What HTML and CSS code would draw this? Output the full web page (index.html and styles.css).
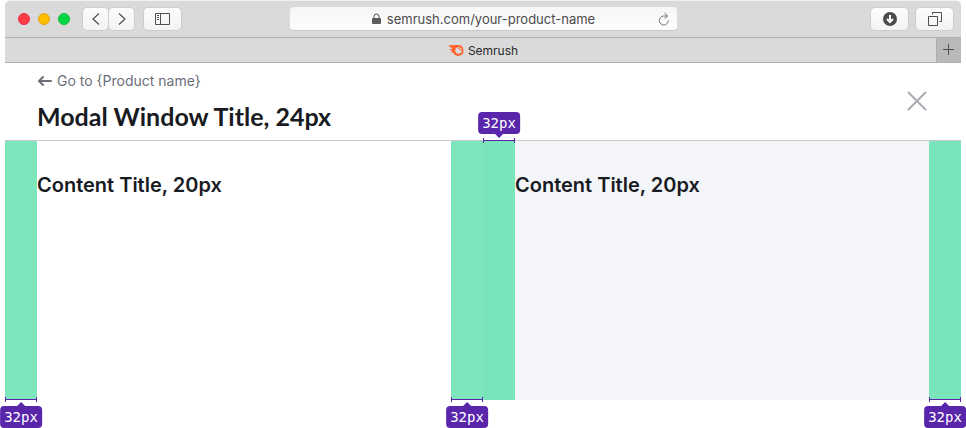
FILE: index.html
```html
<!DOCTYPE html>
<html lang="en">
<head>
<meta charset="utf-8">
<title>Semrush</title>
<link rel="stylesheet" href="styles.css">
</head>
<body>
<div class="window">
  <div class="toolbar">
    <div class="tools">
      <div class="lights"><span class="light red"></span><span class="light yellow"></span><span class="light green"></span></div>
      <div class="nav">
        <button class="tool narrow" aria-label="Back"><svg width="24" height="22" viewBox="0 0 24 22"><path d="M15 5.500L9 11l6 5.500"/></svg></button>
        <button class="tool narrow" aria-label="Forward"><svg width="24" height="22" viewBox="0 0 24 22"><path d="M9 5.500L15 11l-6 5.500"/></svg></button>
      </div>
      <button class="tool" aria-label="Sidebar"><svg width="16" height="12" viewBox="0 0 16 12"><path d="M.5.5h14v11H.5zM5.500.5v11M2 2.500h2M2 4.500h2M2 6.500h2"/></svg></button>
    </div>
    <div class="address">
      <svg class="lock" width="9" height="12" viewBox="0 0 9 12"><rect x="0" y="5" width="9" height="6" rx="1" fill="#5c5c5e" stroke="none"/><path d="M2 5.500V3.500a2.500 2.500 0 0 1 5 0v2"/></svg>
      <span>semrush.com/your-product-name</span>
      <button class="reload" aria-label="Reload"><svg width="12" height="14" viewBox="0 0 12 14"><path d="M9 4H5.500a4.500 4.500 0 1 0 4.800 4.500"/><path d="M6.500 1L9.800 4 6.500 6.500"/></svg></button>
    </div>
    <div class="tools end">
      <button class="tool" aria-label="Downloads"><svg width="14" height="14" viewBox="0 0 14 14"><circle cx="7" cy="7" r="7" fill="#4b4b4b" stroke="none"/><path d="M7 3v7M4 7l3 3 3-3" stroke="#fff" stroke-width="2"/></svg></button>
      <button class="tool" aria-label="Tabs"><svg width="14" height="14" viewBox="0 0 14 14"><path d="M.5 4.500h9v9h-9zM4.500 2.500v-2h9v9h-2"/></svg></button>
    </div>
  </div>
  <div class="tabs">
    <div class="tab">
      <svg width="16" height="11" viewBox="0 0 16 11"><path d="M0 .4C3 .4 6 .1 10 .1a5.400 5.400 0 1 1-4.700 8C4.300 7.800 3.300 7 2.300 6.300 3.500 6.500 4.200 6.500 4.700 6.400 3.500 5.300 2.200 4.500 1 4.100c1.600-.2 2.600 0 3.500.1C3.400 2.300 1.500 1.400 0 .4z" fill="#ff642d"/><circle cx="10.500" cy="5.500" r="3.200" fill="#dadada"/><path d="M10.500 3.500a2 2 0 0 1 2 2" fill="none" stroke="#ff642d"/></svg>
      <span>Semrush</span>
    </div>
    <button class="add" aria-label="New tab"><svg width="12" height="12" viewBox="0 0 12 12"><path d="M5.500 0v11M0 5.500h11"/></svg></button>
  </div>
  <main class="modal">
    <header class="header">
      <div>
        <a class="back" href="#"><svg width="15" height="12" viewBox="0 0 15 12"><path d="M6 2L2 6l4 4M2 6h12"/></svg>Go to {Product name}</a>
        <h1>Modal Window Title, 24px</h1>
      </div>
      <button class="close" aria-label="Close"><svg width="20" height="20" viewBox="0 0 20 20"><path d="M1.500 1.500l17 17M18.500 1.500l-17 17"/></svg></button>
    </header>
    <div class="columns">
      <section class="column">
        <div class="gutter"><div class="measure"><span class="label">32px</span></div></div>
        <h2>Content Title, 20px</h2>
        <div class="gutter"><div class="measure"><span class="label">32px</span></div></div>
      </section>
      <section class="column shaded">
        <div class="gutter"><div class="measure top"><span class="label">32px</span></div></div>
        <h2>Content Title, 20px</h2>
        <div class="gutter"><div class="measure"><span class="label">32px</span></div></div>
      </section>
    </div>
  </main>
</div>
</body>
</html>
```
FILE: styles.css
```css
* { box-sizing: border-box; }
body {
  margin: 0;
  background: #fff;
  color: #191b23;
  font-family: Inter, "Liberation Sans", sans-serif;
}
button {
  padding: 0;
  border: 0;
  background: none;
  display: flex;
  align-items: center;
  justify-content: center;
}
svg { flex: none; }
.window {
  min-height: 100vh;
  padding: 0 5px 28px;
  display: flex;
  flex-direction: column;
}

/* Browser toolbar */
.toolbar {
  height: 38px;
  padding: 0 7px 0 13px;
  display: grid;
  grid-template-columns: 272px 1fr 277px;
  align-items: center;
  background: #dadada;
  border-top: 1px solid #f1f1f1;
  border-bottom: 1px solid #b0b0b0;
  border-radius: 5px 5px 0 0;
}
.toolbar svg, .tabs button svg {
  fill: none;
  stroke: #4f4f4f;
}
.tools { display: flex; align-items: center; }
.lights { display: flex; gap: 8px; margin-right: 12px; }
.light { width: 12px; height: 12px; border-radius: 50%; border: 1px solid; }
.red { background: #ff3b47; border-color: #e33440; }
.yellow { background: #ffbd00; border-color: #e3a514; }
.green { background: #00d742; border-color: #12bd3c; }
.nav { display: flex; margin-right: 8px; }
.tool {
  width: 39px;
  height: 24px;
  border: 1px solid #cdcdcd;
  border-radius: 5px;
  background: linear-gradient(#fcfcfc, #f3f3f3);
}
.narrow { width: 27px; }
.narrow + .narrow { margin-left: -1px; }
.narrow svg { stroke-width: 1.2; }
.end { justify-content: flex-end; gap: 6px; }
.address {
  position: relative;
  height: 24px;
  display: flex;
  align-items: center;
  justify-content: center;
  gap: 6px;
  border-bottom: 1px solid #c8c8c8;
  border-radius: 4px;
  background: linear-gradient(#f6f6f6, #fdfdfd);
  color: #4b4b4d;
  font-size: 13px;
}
.reload { position: absolute; right: 7px; top: 5px; }
.toolbar .reload svg { stroke: #777; }

/* Tab strip */
.tabs {
  height: 25px;
  display: grid;
  grid-template-columns: 25px 1fr 25px;
  background: #dadada;
  border-bottom: 1px solid #b0b0b0;
}
.tab {
  grid-column: 2;
  display: flex;
  align-items: center;
  justify-content: center;
  gap: 4px;
  color: #2b2b2b;
  font-size: 12px;
}
.add { background: #b9b9b9; border-left: 1px solid #adadad; }

/* Modal */
.modal { flex: 1; display: flex; flex-direction: column; }
.header {
  padding: 8px 34px 10px 32px;
  display: flex;
  align-items: center;
  justify-content: space-between;
  border-bottom: 1px solid #c9c9cb;
}
.back {
  display: flex;
  align-items: center;
  gap: 5px;
  color: #6c6e79;
  font-size: 14px;
  line-height: 20px;
  text-decoration: none;
}
.back svg { fill: none; stroke: #6c6e79; stroke-width: 2; stroke-linecap: round; }
h1 {
  margin: 11px 0 0;
  font-family: Lato, Inter, sans-serif;
  font-size: 25px;
  font-weight: 700;
  line-height: 28px;
}
.close svg { fill: none; stroke: #a9abb6; stroke-width: 2; stroke-linecap: round; }
.columns { flex: 1; display: grid; grid-template-columns: 1fr 1fr; }
.column { display: grid; grid-template-columns: 32px 1fr 32px; }
.shaded { background: #f4f5f9; }
h2 {
  margin: 32px 0 0;
  font-size: 20px;
  font-weight: 600;
  line-height: 24px;
}

/* Spacing annotations */
.gutter { position: relative; background: #7de6bd; }
.shaded .gutter { background: #7ae4bb; }
.measure {
  position: absolute;
  left: 0;
  right: 0;
  bottom: -2px;
  height: 5px;
  border: solid #5925ab;
  border-width: 0 1px;
  background: linear-gradient(#5925ab, #5925ab) center / 100% 1px no-repeat;
}
.label {
  position: absolute;
  top: 9px;
  left: 50%;
  transform: translateX(-50%);
  padding: 0 4px;
  border-radius: 4px;
  background: #5925ab;
  color: #fff;
  font-family: "DejaVu Sans Mono", monospace;
  font-size: 14px;
  line-height: 22px;
}
.label::before {
  content: "";
  position: absolute;
  top: -4px;
  left: 50%;
  margin-left: -4px;
  border: solid transparent;
  border-width: 0 4px 4px;
  border-bottom-color: #5925ab;
}
.top { top: -3px; bottom: auto; }
.top .label { top: auto; bottom: 9px; }
.top .label::before {
  top: 100%;
  border-width: 4px 4px 0;
  border-top-color: #5925ab;
}
```
